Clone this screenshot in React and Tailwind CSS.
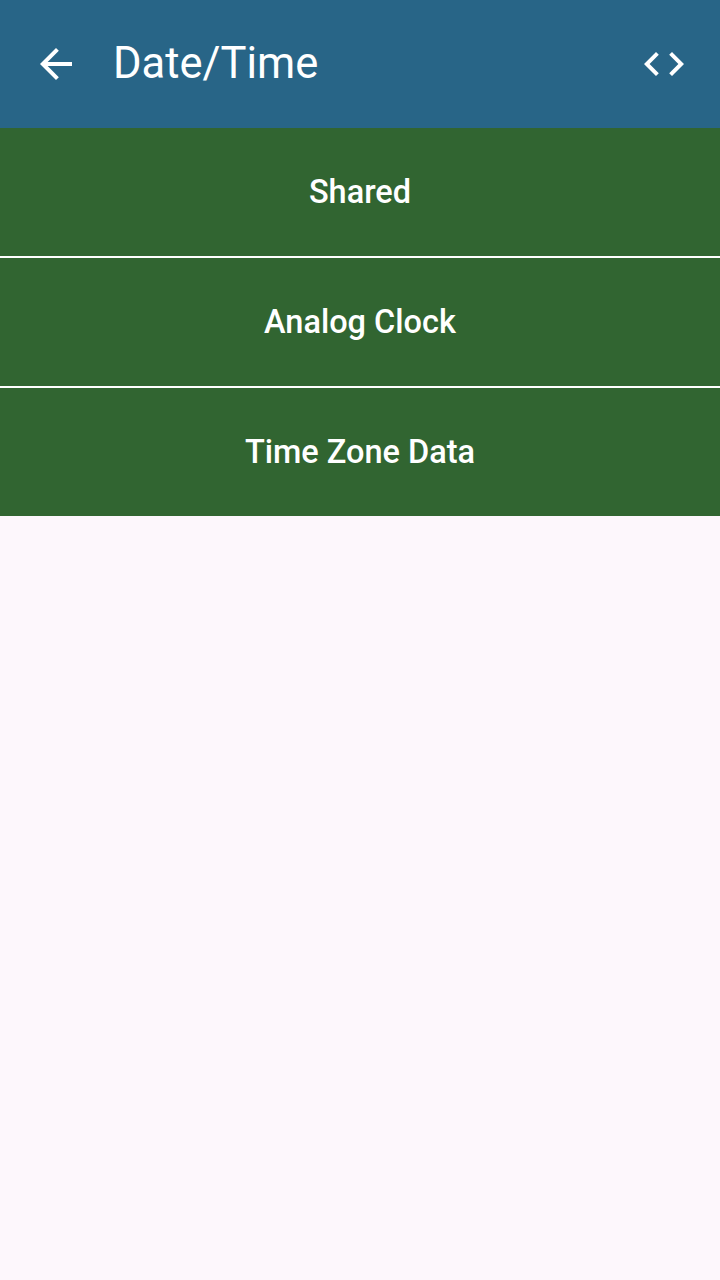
import React from 'react';

const ITEMS = ['Shared', 'Analog Clock', 'Time Zone Data'];

export default function App() {
  return (
    <div className="min-h-[1280px] w-[720px] bg-[#fdf7fc]" style={{ fontFamily: 'Roboto, sans-serif' }}>
      <div className="flex h-32 items-center bg-[#286587] text-white">
        <svg className="ml-8 h-12 w-12" viewBox="0 0 24 24" fill="currentColor">
          <path d="M20 11H7.83l5.59-5.59L12 4l-8 8 8 8 1.41-1.41L7.83 13H20v-2z" />
        </svg>
        <h1 className="ml-[33px] text-[43.5px] leading-none">Date/Time</h1>
        <svg className="ml-auto mr-8 h-12 w-12" viewBox="0 0 24 24" fill="currentColor">
          <path d="M9.4 16.6L4.8 12l4.6-4.6L8 6l-6 6 6 6 1.4-1.4zm5.2 0l4.6-4.6-4.6-4.6L16 6l6 6-6 6-1.4-1.4z" />
        </svg>
      </div>
      <div className="flex flex-col gap-[2px] bg-white">
        {ITEMS.map((item) => (
          <div key={item} className="flex h-32 items-center justify-center bg-[#316531] text-[32.5px] font-medium text-white">
            {item}
          </div>
        ))}
      </div>
    </div>
  );
}
